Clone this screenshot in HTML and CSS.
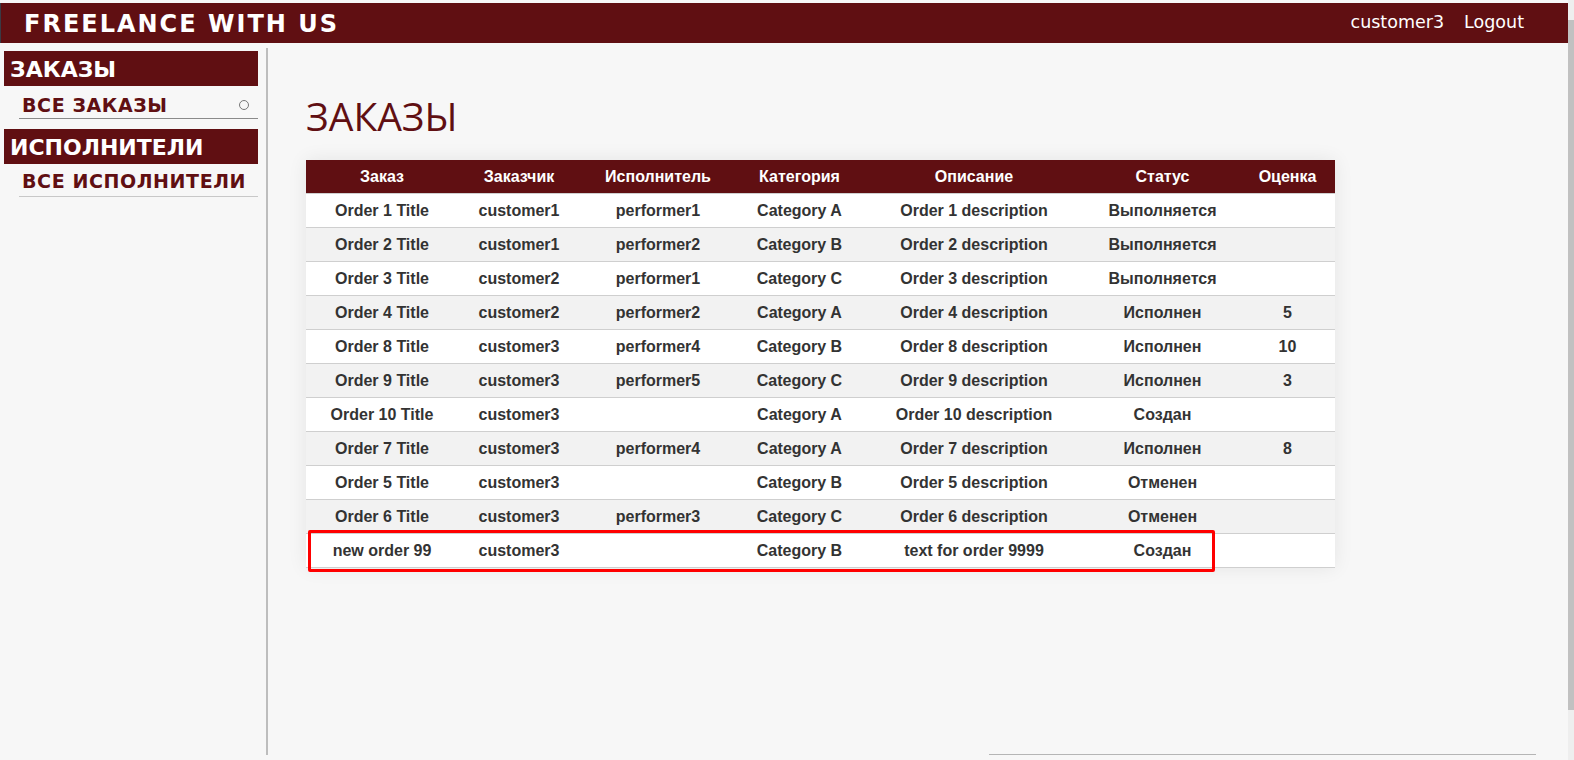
FILE: index.html
```html
<!DOCTYPE html>
<html lang="ru">
<head>
<meta charset="utf-8">
<title>Freelance with us</title>
<link rel="stylesheet" href="styles.css">
</head>
<body>
<div class="page">
  <header class="topbar">
    <div class="brand">FREELANCE WITH US</div>
    <nav class="user-nav">
      <span class="user">customer3</span>
      <a class="logout" href="#">Logout</a>
    </nav>
  </header>
  <div class="layout">
    <aside class="sidebar">
      <div class="side-group">
        <div class="side-title">ЗАКАЗЫ</div>
        <a class="side-link active" href="#">ВСЕ ЗАКАЗЫ<span class="dot"></span></a>
      </div>
      <div class="side-group">
        <div class="side-title">ИСПОЛНИТЕЛИ</div>
        <a class="side-link light" href="#">ВСЕ ИСПОЛНИТЕЛИ</a>
      </div>
    </aside>
    <main class="content">
      <h1 class="page-title">ЗАКАЗЫ</h1>
      <div class="table-wrap">
        <table class="orders">
          <colgroup>
            <col class="c1"><col class="c2"><col class="c3"><col class="c4"><col class="c5"><col class="c6"><col class="c7">
          </colgroup>
          <thead>
            <tr><th>Заказ</th><th>Заказчик</th><th>Исполнитель</th><th>Категория</th><th>Описание</th><th>Статус</th><th>Оценка</th></tr>
          </thead>
          <tbody>
            <tr><td>Order 1 Title</td><td>customer1</td><td>performer1</td><td>Category A</td><td>Order 1 description</td><td>Выполняется</td><td></td></tr>
            <tr><td>Order 2 Title</td><td>customer1</td><td>performer2</td><td>Category B</td><td>Order 2 description</td><td>Выполняется</td><td></td></tr>
            <tr><td>Order 3 Title</td><td>customer2</td><td>performer1</td><td>Category C</td><td>Order 3 description</td><td>Выполняется</td><td></td></tr>
            <tr><td>Order 4 Title</td><td>customer2</td><td>performer2</td><td>Category A</td><td>Order 4 description</td><td>Исполнен</td><td>5</td></tr>
            <tr><td>Order 8 Title</td><td>customer3</td><td>performer4</td><td>Category B</td><td>Order 8 description</td><td>Исполнен</td><td>10</td></tr>
            <tr><td>Order 9 Title</td><td>customer3</td><td>performer5</td><td>Category C</td><td>Order 9 description</td><td>Исполнен</td><td>3</td></tr>
            <tr><td>Order 10 Title</td><td>customer3</td><td></td><td>Category A</td><td>Order 10 description</td><td>Создан</td><td></td></tr>
            <tr><td>Order 7 Title</td><td>customer3</td><td>performer4</td><td>Category A</td><td>Order 7 description</td><td>Исполнен</td><td>8</td></tr>
            <tr><td>Order 5 Title</td><td>customer3</td><td></td><td>Category B</td><td>Order 5 description</td><td>Отменен</td><td></td></tr>
            <tr><td>Order 6 Title</td><td>customer3</td><td>performer3</td><td>Category C</td><td>Order 6 description</td><td>Отменен</td><td></td></tr>
            <tr><td>new order 99</td><td>customer3</td><td></td><td>Category B</td><td>text for order 9999</td><td>Создан</td><td></td></tr>
          </tbody>
        </table>
        <div class="highlight"></div>
      </div>
      <div class="footer-line"></div>
    </main>
  </div>
</div>
<div class="scrollbar"><div class="thumb"></div></div>
</body>
</html>
```

FILE: styles.css
```css
html, body {
  margin: 0;
  padding: 0;
  height: 760px;
  overflow: hidden;
}
body {
  display: flex;
  background: #f7f7f7;
}
.page {
  flex: 1;
  display: flex;
  flex-direction: column;
  min-width: 0;
}
.topbar {
  height: 40px;
  margin-top: 3px;
  background: #600f12;
  display: flex;
  align-items: center;
  justify-content: space-between;
  padding: 0 44px 0 23px;
  border-left: 1px solid #3a3a44;
}
.brand {
  font-family: "DejaVu Sans", Verdana, sans-serif;
  font-weight: bold;
  font-size: 24px;
  letter-spacing: 2px;
  color: #ffffff;
  padding-top: 2px;
}
.user-nav {
  display: flex;
  gap: 20px;
  font-family: "DejaVu Sans", Verdana, sans-serif;
  font-size: 17.5px;
  color: #ffffff;
  padding-bottom: 2px;
}
.logout {
  color: #ffffff;
  text-decoration: none;
}
.layout {
  flex: 1;
  display: flex;
  margin-top: 5px;
  margin-bottom: 5px;
}
.sidebar {
  width: 254px;
  padding: 3px 8px 0 4px;
  border-right: 2px solid #bdbdbd;
  display: flex;
  flex-direction: column;
  gap: 10px;
}
.side-title {
  background: #600f12;
  color: #ffffff;
  font-family: "DejaVu Sans", Verdana, sans-serif;
  font-weight: bold;
  font-size: 22px;
  height: 35px;
  line-height: 37px;
  padding-left: 6px;
}
.side-link {
  display: flex;
  align-items: center;
  justify-content: space-between;
  margin-left: 15px;
  padding: 5px 9px 0 3px;
  height: 27px;
  border-bottom: 1px solid #8a8a8a;
  color: #600f12;
  font-family: "DejaVu Sans", Verdana, sans-serif;
  font-weight: bold;
  font-size: 19px;
  letter-spacing: 0.6px;
  text-decoration: none;
}
.side-link.light {
  padding-top: 2px;
  height: 30px;
  border-bottom-color: #c8c8c8;
}
.dot {
  width: 10px;
  height: 10px;
  border: 1px solid #777;
  border-radius: 50%;
  box-sizing: border-box;
}
.content {
  flex: 1;
  display: flex;
  flex-direction: column;
  padding-left: 38px;
}
.page-title {
  margin: 46px 0 22px 0;
  font-family: "Open Sans", sans-serif;
  font-weight: normal;
  font-size: 39px;
  line-height: 44px;
  color: #600f12;
}
.table-wrap {
  position: relative;
  width: 1029px;
  box-shadow: 0 0 18px rgba(0, 0, 0, 0.08);
}
.orders {
  width: 1029px;
  border-collapse: collapse;
  table-layout: fixed;
  font-family: "Liberation Sans", Arial, sans-serif;
}
.c1 { width: 152px; }
.c2 { width: 122px; }
.c3 { width: 156px; }
.c4 { width: 127px; }
.c5 { width: 222px; }
.c6 { width: 155px; }
.c7 { width: 95px; }
.orders th {
  background: #600f12;
  color: #ffffff;
  font-size: 16px;
  font-weight: bold;
  height: 33px;
  padding: 0;
  text-align: center;
}
.orders td {
  height: 33px;
  padding: 0;
  text-align: center;
  font-size: 16px;
  font-weight: bold;
  color: #333333;
  border-top: 1px solid #cfcfcf;
}
.orders tbody tr:last-child td {
  border-bottom: 1px solid #cfcfcf;
}
.orders tbody tr:nth-child(odd) {
  background: #ffffff;
}
.orders tbody tr:nth-child(even) {
  background: #f2f2f2;
}
.highlight {
  position: absolute;
  left: 2px;
  bottom: -4px;
  width: 901px;
  height: 36px;
  border: 3px solid #ff0000;
  border-radius: 2px;
  pointer-events: none;
}
.footer-line {
  margin-top: auto;
  margin-left: 683px;
  width: 547px;
  height: 1px;
  background: #b5b5b5;
}
.scrollbar {
  width: 6px;
  height: 760px;
  background: #eeeeee;
  display: flex;
  flex-direction: column;
  padding-top: 20px;
  box-sizing: border-box;
}
.thumb {
  height: 690px;
  background: #c1c1c1;
}
```
